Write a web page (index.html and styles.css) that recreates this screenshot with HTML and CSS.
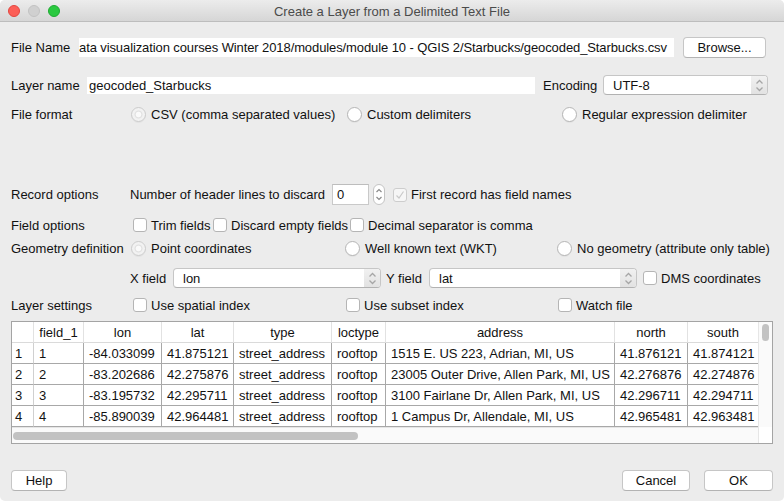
FILE: index.html
```html
<!DOCTYPE html>
<html>
<head>
<meta charset="utf-8">
<link rel="stylesheet" href="styles.css">
</head>
<body>
<div class="window">
  <div class="titlebar">
    <div class="lights">
      <span class="light red"></span>
      <span class="light grey"></span>
      <span class="light green"></span>
    </div>
    <div class="title">Create a Layer from a Delimited Text File</div>
    <div></div>
  </div>
  <div class="content">
    <div class="row r1">
      <span class="lbl w68">File Name</span>
      <div class="field path">ata visualization courses Winter 2018/modules/module 10 - QGIS 2/Starbucks/geocoded_Starbucks.csv</div>
      <button class="btn browse">Browse...</button>
    </div>
    <div class="row r2">
      <span class="lbl w76">Layer name</span>
      <div class="field lname">geocoded_Starbucks</div>
      <span class="lbl enc">Encoding</span>
      <div class="combo enccombo"><span class="ctext">UTF-8</span><span class="arrows"><svg width="9" height="13" viewBox="0 0 9 13"><path d="M1.5 4.5 L4.5 1.5 L7.5 4.5 M1.5 8.5 L4.5 11.5 L7.5 8.5" fill="none" stroke="#a6a6a6" stroke-width="1.3"/></svg></span></div>
    </div>
    <div class="row r3">
      <span class="lbl w119">File format</span>
      <span class="opt o216 ml1"><span class="radio on"></span>CSV (comma separated values)</span>
      <span class="opt o215"><span class="radio"></span>Custom delimiters</span>
      <span class="opt"><span class="radio"></span>Regular expression delimiter</span>
    </div>
    <div class="row r4">
      <span class="lbl w119">Record options</span>
      <span class="lbl w202">Number of header lines to discard</span>
      <div class="field spin">0</div>
      <span class="stepper"><svg width="8" height="15" viewBox="0 0 8 15"><path d="M1.5 5 L4 2.5 L6.5 5 M1.5 10 L4 12.5 L6.5 10" fill="none" stroke="#8a8a8a" stroke-width="1.2"/></svg></span>
      <span class="opt ml8"><span class="check on"><svg width="12" height="12" viewBox="0 0 12 12"><path d="M2.5 6.5 L5 9 L9.5 2.5" fill="none" stroke="#c9c9c9" stroke-width="1.2"/></svg></span>First record has field names</span>
    </div>
    <div class="row r5">
      <span class="lbl w119">Field options</span>
      <span class="opt c80 ml3"><span class="check"></span>Trim fields</span>
      <span class="opt c137"><span class="check"></span>Discard empty fields</span>
      <span class="opt"><span class="check"></span>Decimal separator is comma</span>
    </div>
    <div class="row r6">
      <span class="lbl w119">Geometry definition</span>
      <span class="opt o214 ml1"><span class="radio on"></span>Point coordinates</span>
      <span class="opt o212"><span class="radio"></span>Well known text (WKT)</span>
      <span class="opt"><span class="radio"></span>No geometry (attribute only table)</span>
    </div>
    <div class="row r7">
      <span class="lbl w119"></span>
      <span class="lbl w43">X field</span>
      <div class="combo xy"><span class="ctext">lon</span><span class="arrows"><svg width="9" height="13" viewBox="0 0 9 13"><path d="M1.5 4.5 L4.5 1.5 L7.5 4.5 M1.5 8.5 L4.5 11.5 L7.5 8.5" fill="none" stroke="#a6a6a6" stroke-width="1.3"/></svg></span></div>
      <span class="lbl w43 ml5">Y field</span>
      <div class="combo xy"><span class="ctext">lat</span><span class="arrows"><svg width="9" height="13" viewBox="0 0 9 13"><path d="M1.5 4.5 L4.5 1.5 L7.5 4.5 M1.5 8.5 L4.5 11.5 L7.5 8.5" fill="none" stroke="#a6a6a6" stroke-width="1.3"/></svg></span></div>
      <span class="opt ml6"><span class="check"></span>DMS coordinates</span>
    </div>
    <div class="row r8">
      <span class="lbl w119">Layer settings</span>
      <span class="opt o213 ml3"><span class="check"></span>Use spatial index</span>
      <span class="opt o212"><span class="check"></span>Use subset index</span>
      <span class="opt"><span class="check"></span>Watch file</span>
    </div>
    <div class="tablebox">
      <div class="tabletop">
        <table class="grid">
          <colgroup>
            <col style="width:22px"><col style="width:50px"><col style="width:78px"><col style="width:72px"><col style="width:98px"><col style="width:54px"><col style="width:229px"><col style="width:73px"><col style="width:70px">
          </colgroup>
          <thead>
            <tr><th class="rn"></th><th>field_1</th><th>lon</th><th>lat</th><th>type</th><th>loctype</th><th>address</th><th>north</th><th>south</th></tr>
          </thead>
          <tbody>
            <tr><td class="rn">1</td><td>1</td><td>-84.033099</td><td>41.875121</td><td>street_address</td><td>rooftop</td><td>1515 E. US 223, Adrian, MI, US</td><td>41.876121</td><td>41.874121</td></tr>
            <tr><td class="rn">2</td><td>2</td><td>-83.202686</td><td>42.275876</td><td>street_address</td><td>rooftop</td><td>23005 Outer Drive, Allen Park, MI, US</td><td>42.276876</td><td>42.274876</td></tr>
            <tr><td class="rn">3</td><td>3</td><td>-83.195732</td><td>42.295711</td><td>street_address</td><td>rooftop</td><td>3100 Fairlane Dr, Allen Park, MI, US</td><td>42.296711</td><td>42.294711</td></tr>
            <tr><td class="rn">4</td><td>4</td><td>-85.890039</td><td>42.964481</td><td>street_address</td><td>rooftop</td><td>1 Campus Dr, Allendale, MI, US</td><td>42.965481</td><td>42.963481</td></tr>
          </tbody>
        </table>
        <div class="vbar"><span class="vthumb"></span></div>
      </div>
      <div class="hbarrow">
        <div class="hbar"><span class="hthumb"></span></div>
        <div class="corner"></div>
      </div>
    </div>
    <div class="buttons">
      <button class="btn help">Help</button>
      <span class="spacer"></span>
      <button class="btn cancel">Cancel</button>
      <button class="btn ok">OK</button>
    </div>
  </div>
</div>
</body>
</html>
```

FILE: styles.css
```css
* { box-sizing: border-box; }
html, body { margin: 0; padding: 0; background: #ffffff; }
body {
  font-family: "Liberation Sans", Arial, Helvetica, sans-serif;
  font-size: 13px;
  color: #111;
}
.window {
  width: 784px;
  height: 501px;
  background: #ececec;
  border-radius: 5px;
  overflow: hidden;
  display: flex;
  flex-direction: column;
}
.titlebar {
  height: 22px;
  flex: none;
  display: grid;
  grid-template-columns: 1fr auto 1fr;
  align-items: center;
  background: linear-gradient(#ececec, #d6d6d6);
  border-bottom: 1px solid #bdbdbd;
}
.lights { display: flex; gap: 8px; padding-left: 8px; }
.light { width: 12px; height: 12px; border-radius: 50%; display: block; }
.light.red { background: #fc5f57; border: 1px solid #e2463f; }
.light.grey { background: #d0d0d0; border: 1px solid #c2c2c2; }
.light.green { background: #2ac940; border: 1px solid #1eaa32; }
.title { color: #4b4b4b; font-size: 13px; padding-top: 1px; }

.content {
  flex: 1;
  display: flex;
  flex-direction: column;
  padding: 0 11px;
}
.row { display: flex; align-items: center; flex: none; }
.r1 { margin-top: 15px; height: 21px; }
.r2 { margin-top: 17px; height: 20px; }
.r3 { margin-top: 9px; height: 20px; }
.r4 { margin-top: 60px; height: 21px; }
.r5 { margin-top: 10px; height: 20px; }
.r6 { margin-top: 3px; height: 20px; }
.r7 { margin-top: 10px; height: 20px; }
.r8 { margin-top: 7px; height: 20px; }

.lbl { flex: none; white-space: nowrap; }
.w68 { width: 68px; }
.w76 { width: 76px; }
.w119 { width: 119px; }
.w202 { width: 202px; }
.w43 { width: 43px; }
.enc { margin-left: 8px; width: 60px; }
.ml1 { margin-left: 1px; }
.ml3 { margin-left: 3px; }
.ml5 { margin-left: 5px; }
.ml6 { margin-left: 6px; }
.ml8 { margin-left: 8px; }

.field {
  background: #fff;
  white-space: nowrap;
  overflow: hidden;
  flex: none;
}
.path { width: 595px; height: 19px; line-height: 19px; letter-spacing: -0.1px; }
.lname { width: 448px; height: 17px; line-height: 17px; padding-left: 2px; }
.spin {
  width: 37px; height: 21px; line-height: 19px; padding-left: 4px;
  border: 1px solid #c9c9c9; border-top-color: #bdbdbd;
}
.stepper {
  margin-left: 4px;
  width: 12px; height: 21px;
  border: 1px solid #c4c4c4;
  border-radius: 6px;
  background: #fff;
  display: flex; align-items: center; justify-content: center;
  flex: none;
}

.btn {
  font-family: inherit;
  font-size: 13px;
  color: #111;
  background: #fff;
  border: 1px solid #c6c6c6;
  border-bottom-color: #b3b3b3;
  border-radius: 4px;
  height: 21px;
  padding: 0;
  flex: none;
}
.browse { margin-left: 9px; width: 83px; }

.combo {
  flex: none;
  height: 20px;
  background: #fff;
  border: 1px solid #c6c6c6;
  border-bottom-color: #b2b2b2;
  border-radius: 4px;
  display: flex;
  align-items: center;
  justify-content: space-between;
  overflow: hidden;
}
.ctext { padding-left: 9px; }
.arrows {
  width: 16px; height: 18px;
  background: linear-gradient(#f1f1f1, #e2e2e2);
  display: flex; align-items: center; justify-content: center;
}
.enccombo { width: 165px; }
.xy { width: 208px; }

.opt { display: flex; align-items: center; flex: none; white-space: nowrap; }
.o216 { width: 216px; }
.o215 { width: 215px; }
.o214 { width: 214px; }
.o213 { width: 213px; }
.o212 { width: 212px; }
.c80 { width: 80px; }
.c137 { width: 137px; }

.radio {
  width: 15px; height: 15px;
  border-radius: 50%;
  border: 1px solid #b5b5b5;
  background: #fff;
  margin-right: 5px;
  flex: none;
  box-shadow: 0 1px 0 rgba(0,0,0,0.04);
}
.radio.on {
  border-color: #cbcbcb;
  background: radial-gradient(circle, #fafafa 0 2.5px, #dedede 3.3px, #f2f2f2 4.5px, #f2f2f2 100%);
}
.check {
  width: 14px; height: 14px;
  border-radius: 3px;
  border: 1px solid #b5b5b5;
  background: #fff;
  margin-right: 4px;
  flex: none;
  display: flex; align-items: center; justify-content: center;
}
.check.on { border-color: #cdcdcd; background: #f6f6f6; }

.tablebox {
  margin-top: 6px;
  width: 762px;
  height: 123px;
  border: 1px solid #a4a4a4;
  background: #fff;
  display: flex;
  flex-direction: column;
  flex: none;
}
.tabletop { display: flex; height: 105px; overflow: hidden; }
.grid {
  width: 746px;
  table-layout: fixed;
  border-collapse: separate;
  border-spacing: 0;
  flex: none;
}
.grid th {
  height: 21px;
  font-weight: normal;
  text-align: center;
  padding: 0;
  border-bottom: 1px solid #dadada;
  border-right: 1px solid #e2e2e2;
  white-space: nowrap;
  overflow: hidden;
}
.grid td {
  height: 21px;
  padding: 0 0 0 5px;
  border-bottom: 1px solid #a8a8a8;
  border-right: 1px solid #a8a8a8;
  white-space: nowrap;
  overflow: hidden;
}
.grid td.rn { padding-left: 3px; border-right: 1px solid #d0d0d0; }
.grid th:last-child, .grid td:last-child { border-right: none; }
.vbar {
  width: 14px;
  height: 105px;
  border-left: 1px solid #e6e6e6;
  background: #fafafa;
  flex: none;
  padding: 2px 0 0 3px;
}
.vthumb {
  display: block;
  width: 7px; height: 17px;
  border-radius: 4px;
  background: #c2c2c2;
}
.hbarrow { display: flex; height: 16px; }
.hbar {
  width: 746px;
  background: #fafafa;
  border-top: 1px solid #e6e6e6;
  padding: 4px 0 0 1px;
}
.hthumb {
  display: block;
  width: 345px; height: 8px;
  border-radius: 4px;
  background: #c2c2c2;
}
.corner { flex: 1; background: #fff; border-left: 1px solid #e6e6e6; }

.buttons {
  margin-top: 26px;
  display: flex;
  align-items: center;
  height: 21px;
  flex: none;
  width: 762px;
}
.help { width: 56px; }
.spacer { flex: 1; }
.cancel { width: 68px; }
.ok { width: 69px; margin-left: 14px; }
```
